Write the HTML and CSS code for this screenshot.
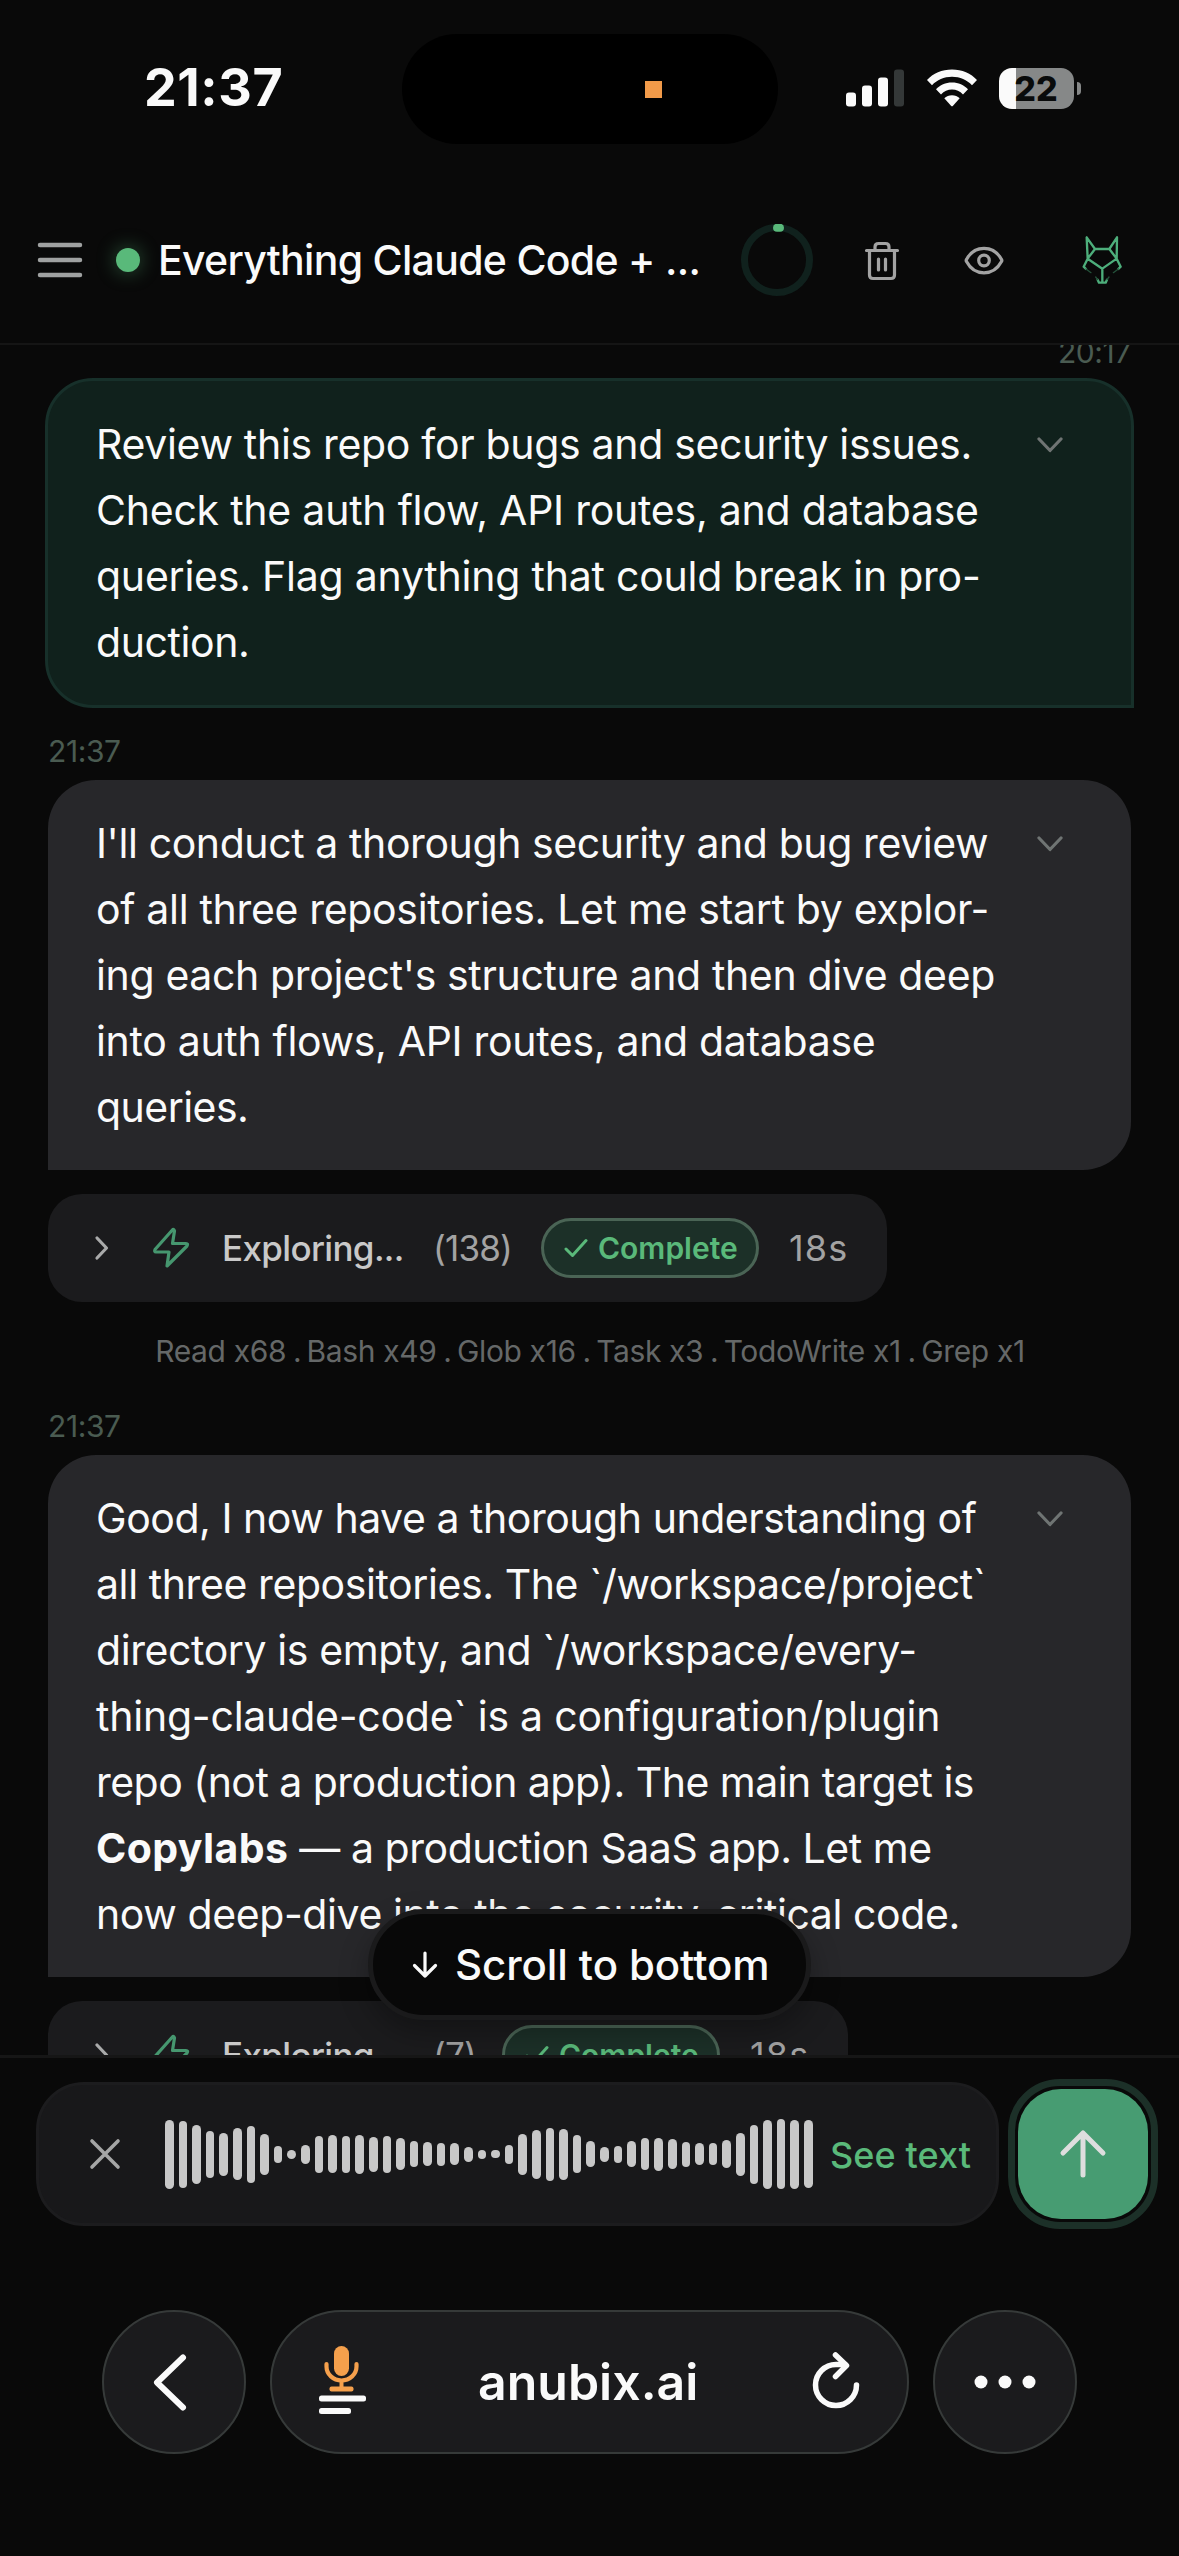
FILE: index.html
```html
<!DOCTYPE html>
<html lang="en">
<head>
<meta charset="utf-8">
<title>Anubix</title>
<link rel="stylesheet" href="styles.css">
</head>
<body>
<div class="screen">
  <div class="status">
    <div class="status-time">21:37</div>
    <div class="island"><span class="mic-dot"></span></div>
    <div class="status-icons">
      <svg width="58" height="38" viewBox="0 0 58 38" fill="#fafafa"><rect x="0" y="23.5" width="10" height="14" rx="3"/><rect x="16" y="16.500" width="10" height="21" rx="3"/><rect x="32" y="8.500" width="10" height="29" rx="3"/><rect x="48" y="0.500" width="10" height="37" rx="3" fill="#343838"/></svg>
      <svg class="wifi" width="52" height="38" viewBox="0 0 52 38" fill="#fafafa"><path d="M26 .5C36 .5 45 4.500 51 11L46 16.300C41 11 34 7.800 26 7.800S11 11 6 16.300L1 11C7 4.500 16 .5 26 .5Z"/><path d="M26 13.500C32.500 13.500 38 16 42 20.300L37 25.400C34 22.300 30.200 20.500 26 20.500S18 22.300 15 25.400L10 20.300C14 16 19.500 13.500 26 13.500Z"/><path d="M26 26.200C29 26.200 31.600 27.200 33.700 29.200L27 36.800Q26 37.800 25 36.800L18.300 29.200C20.400 27.200 23 26.200 26 26.200Z"/></svg>
      <div class="battery">22</div><span class="nub"></span>
    </div>
  </div>

  <header class="header">
    <svg class="menu" width="46" height="36" viewBox="0 0 46 36" stroke="#9fa1a1" stroke-width="4.500" stroke-linecap="round"><path d="M3 3H43M3 18H43M3 33H43"/></svg>
    <span class="online"></span>
    <h1 class="title">Everything Claude Code + ...</h1>
    <svg class="ring" width="72" height="72" viewBox="0 0 72 72" fill="none"><circle cx="36" cy="36" r="32.500" stroke="#10211d" stroke-width="7"/><path d="M36 3.800h3" stroke="#59b97a" stroke-width="8" stroke-linecap="round"/></svg>
    <svg class="trash" width="36" height="40" viewBox="0 0 36 40" fill="none" stroke="#a3a3a3" stroke-width="3.200" stroke-linecap="round" stroke-linejoin="round"><path d="M2.500 9.500H33.500M5.500 9.500V34Q5.500 37.500 9 37.500H27Q30.500 37.500 30.500 34V9.500M11 9.500V6Q11 2.500 14.500 2.500H21.500Q25 2.500 25 6V9.500M14.500 18V29M21.500 18V29"/></svg>
    <svg class="eye" width="40" height="30" viewBox="0 0 40 30" fill="none" stroke="#a3a3a3" stroke-width="3.200" stroke-linejoin="round"><path d="M2.500 15.500Q1.800 14.500 2.500 13.500C6.500 6 13 2.300 20 2.300S33.500 6 37.500 13.500Q38.200 14.500 37.500 15.500C33.500 23 27 26.800 20 26.800S6.500 23 2.500 15.500Z"/><circle cx="20" cy="14.500" r="5.300"/></svg>
    <svg class="fox" width="64" height="70" viewBox="0 0 192 210" fill="none" stroke="#4dae7b" stroke-width="7" stroke-linejoin="round" stroke-linecap="round"><path d="M47 37L50 101L72 72ZM138 37L137 101L115 72ZM72 72H115M50 101L94 131L137 101M94 131V172M50 101L38 125L45 132M137 101L149 125L142 132M80 164L84 173H104L108 164"/><path d="M45 132L60 143M142 132L127 143M80 164L74 156M108 164L114 156" stroke="#24513a" stroke-width="4"/></svg>
  </header>

  <main class="chat">
    <time class="stamp stamp-right">20:17</time>
    <article class="bubble user">
      <p class="text"><span class="ls3">Review this repo for bugs and security issues.</span><br><span class="ls2">Check the auth flow, API routes, and database</span><br><span class="ls2">queries. Flag anything that could break in pro-</span><br><span class="ls4">duction.</span></p>
      <svg class="chev" width="26" height="16" viewBox="0 0 26 16"><path d="M2 2L13 13.500L24 2"/></svg>
    </article>
    <time class="stamp">21:37</time>
    <article class="bubble">
      <p class="text"><span class="ls4">I'll conduct a thorough security and bug review</span><br><span class="ls3">of all three repositories. Let me start by explor-</span><br><span class="ls35">ing each project's structure and then dive deep</span><br><span class="ls3">into auth flows, API routes, and database</span><br><span class="ls5">queries.</span></p>
      <svg class="chev" width="26" height="16" viewBox="0 0 26 16"><path d="M2 2L13 13.500L24 2"/></svg>
    </article>
    <section class="tool">
      <svg class="tool-open" width="16" height="26" viewBox="0 0 16 26"><path d="M3 3L12.500 13L3 23"/></svg>
      <svg class="bolt" width="38" height="42" viewBox="0 0 38 42"><path d="M20.800 2.500L3 22.500Q2 25 4 25H17L15 39L35 19Q36.500 16.500 34 16.500H20.500L22.500 4Q22 2 20.800 2.500Z"/></svg>
      <span class="tool-name">Exploring...</span><span class="tool-count">(138)</span>
      <span class="pill"><svg width="24" height="20" viewBox="0 0 24 20"><path d="M2 11L8.500 17.500L22 2.500"/></svg>Complete</span>
      <span class="tool-time">18s</span>
    </section>
    <p class="summary">Read x68<span class="sep"> . </span>Bash x49<span class="sep"> . </span>Glob x16<span class="sep"> . </span>Task x3<span class="sep"> . </span>TodoWrite x1<span class="sep"> . </span>Grep x1</p>
    <time class="stamp stamp-next">21:37</time>
    <article class="bubble">
      <p class="text"><span class="ls45">Good, I now have a thorough understanding of</span><br><span class="ls4">all three repositories. The `/workspace/project`</span><br><span class="ls4">directory is empty, and `/workspace/every-</span><br><span class="ls2">thing-claude-code` is a configuration/plugin</span><br><span class="ls5">repo (not a production app). The main target is</span><br><span class="ls45"><strong>Copylabs</strong> — a production SaaS app. Let me</span><br><span class="ls4">now deep-dive into the security-critical code.</span></p>
      <svg class="chev" width="26" height="16" viewBox="0 0 26 16"><path d="M2 2L13 13.500L24 2"/></svg>
    </article>
    <section class="tool">
      <svg class="tool-open" width="16" height="26" viewBox="0 0 16 26"><path d="M3 3L12.500 13L3 23"/></svg>
      <svg class="bolt" width="38" height="42" viewBox="0 0 38 42"><path d="M20.800 2.500L3 22.500Q2 25 4 25H17L15 39L35 19Q36.500 16.500 34 16.500H20.500L22.500 4Q22 2 20.800 2.500Z"/></svg>
      <span class="tool-name">Exploring...</span><span class="tool-count short">(7)</span>
      <span class="pill"><svg width="24" height="20" viewBox="0 0 24 20"><path d="M2 11L8.500 17.500L22 2.500"/></svg>Complete</span>
      <span class="tool-time">18s</span>
    </section>
    <button class="to-bottom"><svg width="26" height="28" viewBox="0 0 26 28"><path d="M13 2V25M2.500 14.500L13 25L23.500 14.500"/></svg>Scroll to bottom</button>
  </main>

  <footer class="composer">
    <div class="recorder">
      <svg class="cancel" width="32" height="32" viewBox="0 0 32 32"><path d="M3 3L29 29M29 3L3 29"/></svg>
      <div class="wave" id="wave"></div>
      <span class="see-text">See text</span>
    </div>
    <div class="send-ring"><button class="send"><svg width="50" height="50" viewBox="0 0 50 50"><path d="M25 46V4M5 24L25 4L45 24"/></svg></button></div>
  </footer>

  <nav class="browser">
    <button class="round back"><svg width="40" height="62" viewBox="0 0 40 62" fill="none" stroke="#fafafa" stroke-width="6" stroke-linecap="round" stroke-linejoin="round"><path d="M33 6.500L7 31.500L33 56.500"/></svg></button>
    <div class="address">
      <svg class="page-menu" width="50" height="70" viewBox="0 0 50 70"><rect x="16" y="0" width="15" height="30" rx="7.500" fill="#f5a04c"/><path d="M8.500 18V20.500A15 14 0 0 0 38.500 20.500V18" fill="none" stroke="#f5a04c" stroke-width="4.200" stroke-linecap="round"/><path d="M23.500 35V41" stroke="#f5a04c" stroke-width="4"/><rect x="11.500" y="40.500" width="24" height="5" rx="2" fill="#f5a04c"/><rect x="1" y="49.500" width="47" height="6" rx="2.500" fill="#fafafa"/><rect x="1" y="62" width="32" height="6" rx="2.500" fill="#fafafa"/></svg>
      <span class="url">anubix.ai</span>
      <svg class="reload" width="50" height="60" viewBox="0 0 50 60" fill="none" stroke="#fafafa" stroke-width="5.500" stroke-linecap="round" stroke-linejoin="round"><path d="M45.500 34A20.500 20.500 0 1 1 25 13.500H34"/><path d="M24.500 4L35.500 14.500L24.500 25.500"/></svg>
    </div>
    <button class="round"><svg width="64" height="16" viewBox="0 0 64 16" fill="#fafafa"><circle cx="8" cy="8" r="6.500"/><circle cx="32" cy="8" r="6.500"/><circle cx="56" cy="8" r="6.500"/></svg></button>
  </nav>
</div>
<script src="wave.js"></script>
</body>
</html>
```
FILE: styles.css
```css
* { box-sizing: border-box; }
body { margin: 0; background: #090909; color: #fafafa; font-family: Inter, "Liberation Sans", sans-serif; }
p, h1 { margin: 0; }
svg { display: block; flex: none; }
button { border: 0; padding: 0; font: inherit; color: inherit; background: none; }
.screen { width: 1179px; height: 2556px; overflow: hidden; display: flex; flex-direction: column; }

/* status bar */
.status { height: 176px; display: grid; grid-template-columns: 402px 376px 1fr; align-items: center; flex: none; }
.status-time { padding-left: 144px; font-size: 52px; font-weight: 700; letter-spacing: .6px; line-height: 60px; }
.island { height: 110px; border-radius: 55px; background: #000; display: flex; align-items: center; padding: 0 0 0 243px; margin-top: 2px; }
.mic-dot { width: 17px; height: 17px; background: #f19a49; }
.status-icons { display: flex; align-items: center; padding-left: 68px; }
.wifi { margin: 0 21px 0 22px; }
.battery { width: 75px; height: 41px; border-radius: 13px; background: linear-gradient(90deg, #fafafa 17px, #868888 17px); color: #090b0b; font-size: 34px; font-weight: 800; line-height: 42px; text-align: center; padding-right: 1px; }
.nub { width: 4px; height: 13px; margin-left: 3px; border-radius: 0 4px 4px 0; background: #868888; }

/* app header */
.header { height: 169px; flex: none; display: flex; align-items: center; border-bottom: 2px solid #151515; }
.menu { margin-left: 37px; margin-top: 1px; }
.online { width: 24px; height: 24px; margin-left: 33px; border-radius: 50%; background: #59b97a; box-shadow: 0 0 20px rgba(89, 185, 122, .45); }
.title { width: 581px; margin-left: 18px; font-size: 41px; font-weight: 500; letter-spacing: -.7px; line-height: 50px; white-space: nowrap; }
.ring { margin-left: 2px; }
.trash { margin-left: 51px; margin-top: 2px; }
.eye { margin-left: 64px; margin-top: 2px; }
.fox { margin-left: 67px; margin-top: 1px; }

/* conversation */
.chat { position: relative; height: 1710px; flex: none; overflow: hidden; padding: 0 48px; display: flex; flex-direction: column; }
.chat > * { flex: none; }
.stamp { font-size: 30px; line-height: 36px; letter-spacing: -.4px; color: #4a5b51; margin: 25px 0 11px; }
.stamp-right { align-self: flex-end; margin: -11px 0 8px; }
.stamp-next { margin-top: 39px; }
.bubble { display: flex; justify-content: space-between; padding: 30px 68px 30px 48px; border-radius: 48px 48px 48px 0; background: #27272a; }
.bubble.user { margin: 0 -3px; border: 3px solid #17302a; border-radius: 48px 48px 0 48px; background: #10211c; }
.text { font-size: 41px; line-height: 66px; white-space: nowrap; }
.ls2 { letter-spacing: -.23px; }
.ls3 { letter-spacing: -.32px; }
.ls35 { letter-spacing: -.36px; }
.ls4 { letter-spacing: -.41px; }
.ls45 { letter-spacing: -.46px; }
.ls5 { letter-spacing: -.53px; }
strong { font-weight: 700; letter-spacing: .4px; }
.chev { margin-top: 26px; }
.chev path { fill: none; stroke: #6f7473; stroke-width: 3.200; stroke-linecap: round; stroke-linejoin: round; }

.tool { align-self: flex-start; height: 108px; margin-top: 24px; padding: 0 38px 0 46px; display: flex; align-items: center; border-radius: 34px; background: #1b1b1d; color: #a3a3a3; font-size: 35px; }
.tool-open path { fill: none; stroke: #a9aaaa; stroke-width: 3.200; stroke-linecap: round; stroke-linejoin: round; }
.bolt { margin-left: 42px; }
.bolt path { fill: none; stroke: #46976f; stroke-width: 3.200; stroke-linejoin: round; }
.tool-name { width: 211px; margin-left: 32px; font-weight: 500; letter-spacing: -.65px; color: #c9c9c9; }
.tool-count { width: 108px; letter-spacing: -.8px; }
.tool-count.short { width: 69px; }
.pill { display: flex; align-items: center; gap: 10px; width: 218px; height: 60px; padding-left: 20px; border: 3px solid #4a6455; border-radius: 30px; background: #1c3028; color: #5ab97a; font-size: 30px; font-weight: 600; }
.pill path { fill: none; stroke: #5ab97a; stroke-width: 3; stroke-linecap: round; stroke-linejoin: round; }
.tool-time { width: 60px; margin-left: 30px; font-size: 36px; letter-spacing: 1.200px; }
.summary { margin-top: 31px; padding-left: 1px; text-align: center; font-size: 30px; line-height: 36px; letter-spacing: -.36px; color: #656868; white-space: pre; }
.sep { letter-spacing: -1.700px; }

.to-bottom { position: absolute; left: 368px; top: 1564px; width: 443px; height: 111px; display: flex; align-items: center; padding-left: 39px; gap: 17px; border: 5px solid #1a1a1b; border-radius: 56px; background: #080808; box-shadow: 0 12px 30px rgba(0, 0, 0, .3); font-size: 42px; font-weight: 500; letter-spacing: -.1px; white-space: nowrap; }
.to-bottom path { fill: none; stroke: #fafafa; stroke-width: 3.200; stroke-linecap: round; stroke-linejoin: round; }

/* voice recorder */
.composer { flex: none; height: 195px; display: flex; padding: 21px 21px 0 36px; justify-content: space-between; border-top: 3px solid #161616; }
.recorder { width: 963px; height: 144px; margin-top: 3px; display: flex; align-items: center; border: 3px solid #1c1c1e; border-radius: 48px; background: #18181a; }
.cancel { margin-left: 50px; }
.cancel path { stroke: #a5a6a6; stroke-width: 3.600; stroke-linecap: round; }
.wave { width: 648px; margin-left: 44px; display: flex; align-items: center; justify-content: space-between; }
.wave i { width: 8.600px; border-radius: 5px; background: #c8c8c8; }
.see-text { margin: 2px 0 0 17px; color: #5ab97a; font-size: 36px; font-weight: 500; letter-spacing: .1px; white-space: nowrap; }
.send-ring { width: 150px; height: 150px; padding: 3px; border: 7px solid #1c3028; border-radius: 52px; }
.send { width: 130px; height: 130px; display: grid; place-items: center; border-radius: 43px; background: #479c72; }
.send path { fill: none; stroke: #dedede; stroke-width: 5; stroke-linecap: round; stroke-linejoin: round; }

/* browser toolbar */
.browser { flex: none; display: grid; grid-template-columns: 144px 639px 144px; gap: 24px; padding: 60px 0 0 102px; }
.round, .address { height: 144px; border: 2px solid #363a39; border-radius: 72px; background: #1b1b1d; }
.round { display: grid; place-items: center; }
.back { padding-right: 8px; }
.address { display: flex; align-items: center; }
.page-menu { margin: 0 0 3px 46px; }
.url { width: 336px; margin-left: 110px; font-size: 50px; font-weight: 600; }
.reload { margin-bottom: 3px; margin-left: -3px; }
```
FILE: wave.js
```
// Amplitude of each recorded sample, in pixels.
const levels = [69, 67, 59, 47, 43, 52, 57, 41, 17, 9, 19, 37, 38, 37, 39, 35, 37, 32, 26, 24, 23, 22, 15, 9, 8, 19, 41, 49, 53, 51, 38, 26, 15, 17, 26, 32, 33, 30, 25, 22, 22, 28, 43, 59, 69, 70, 69, 68];
const wave = document.getElementById('wave');
for (const level of levels) {
  const bar = document.createElement('i');
  bar.style.height = level + 'px';
  wave.append(bar);
}
```
